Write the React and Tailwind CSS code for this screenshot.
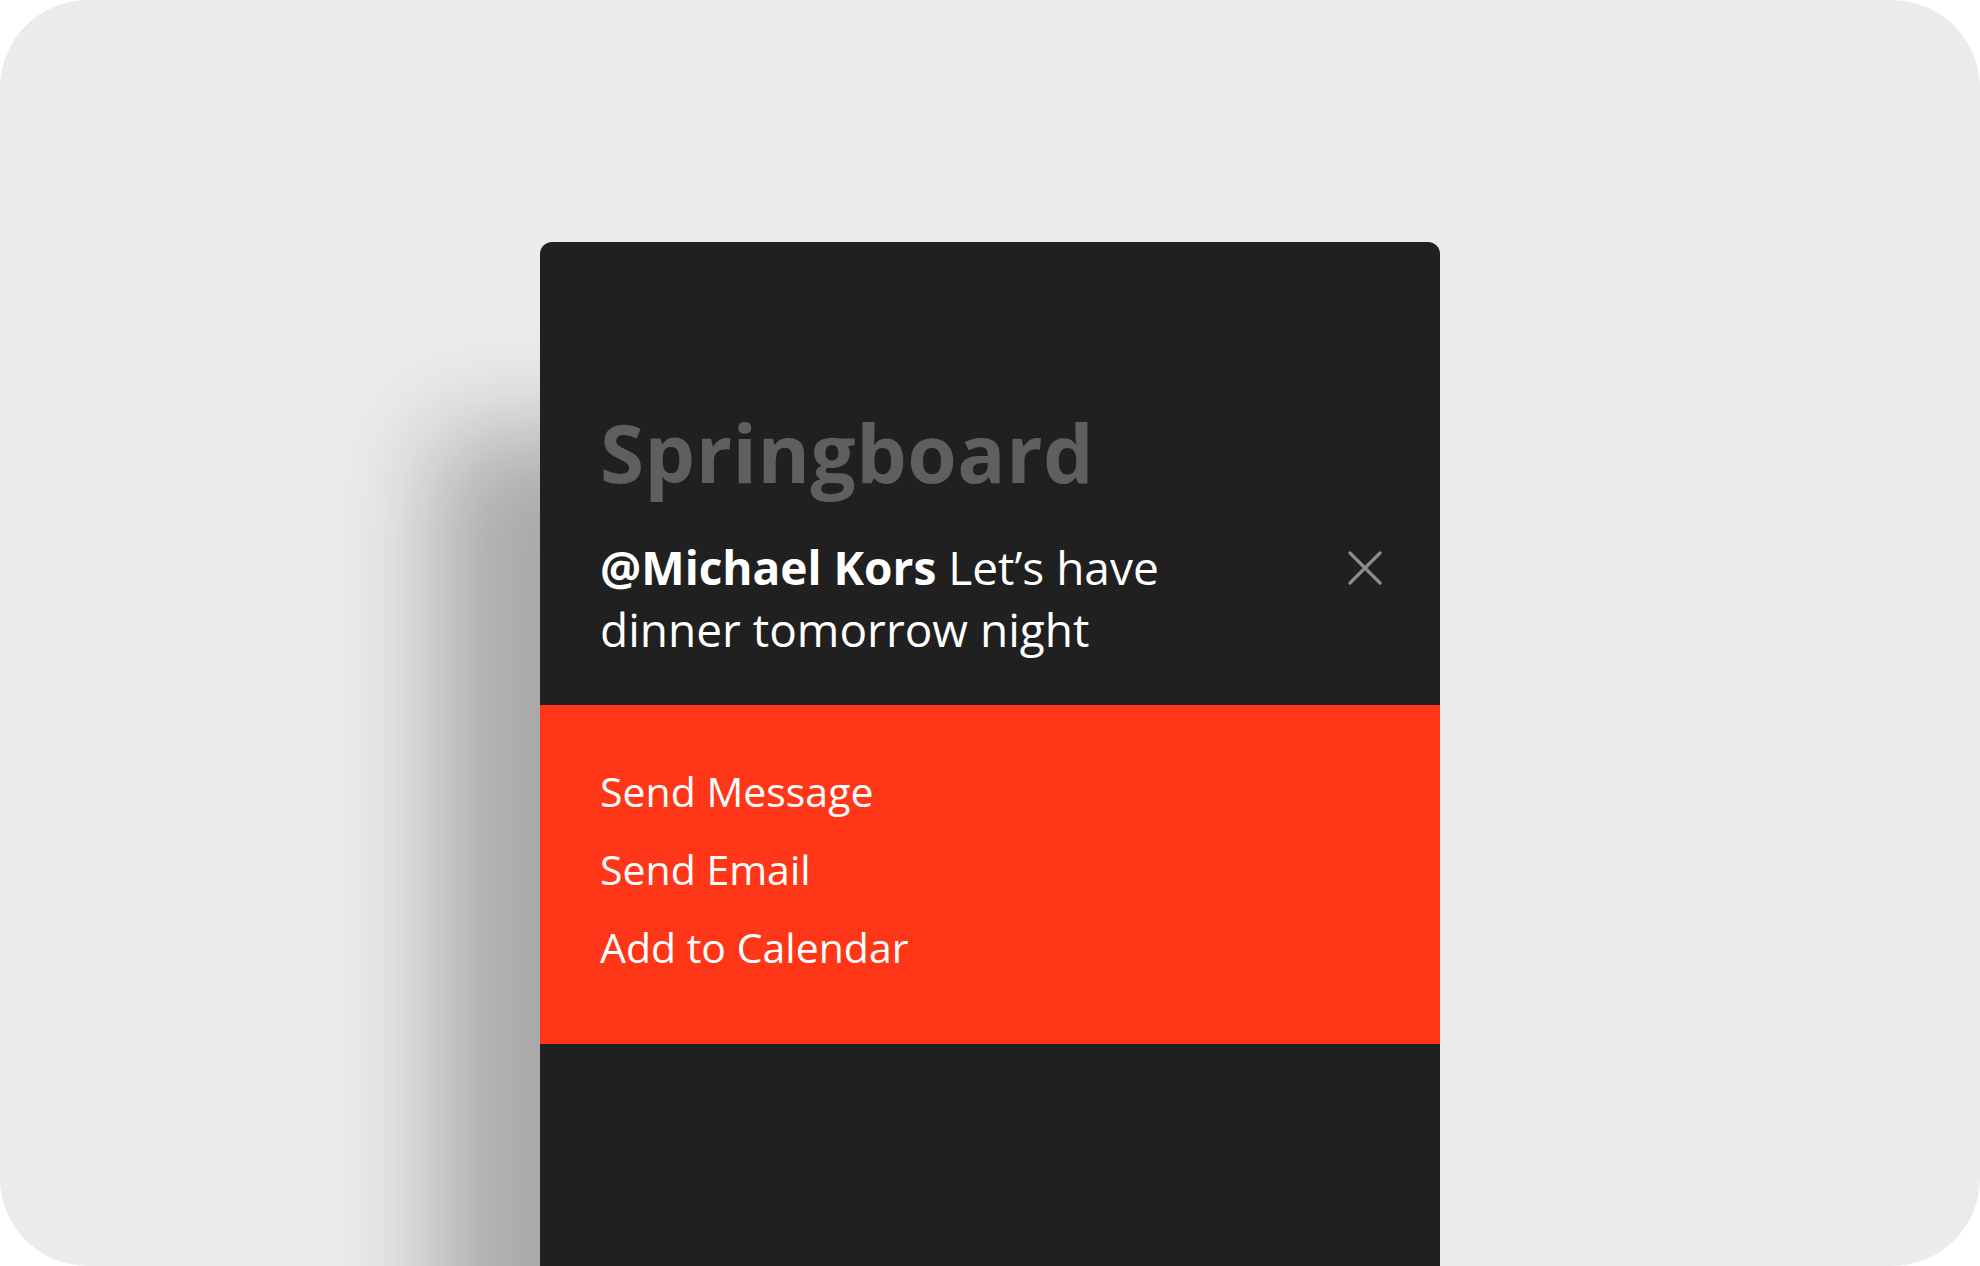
import React from "react";

const App = () => {
  const actions = ["Send Message", "Send Email", "Add to Calendar"];
  return (
    <div className="w-[1980px] h-[1266px] bg-white">
      <div
        className="w-full h-full rounded-[88px] bg-[#ebebeb] overflow-hidden flex justify-center pt-[242px]"
        style={{ fontFamily: '"Open Sans", "Noto Sans", sans-serif' }}
      >
        {/* Notification card */}
        <div className="w-[900px] h-[1100px] shrink-0 rounded-t-xl bg-[#202020] shadow-[-104px_190px_100px_rgba(0,0,0,0.28)] flex flex-col">
          <div className="pl-[60px] pr-[58px] pt-[170px] pb-[45px]">
            <h1 className="text-[80px] leading-[80px] font-bold text-[#5f5f5f] tracking-[0.5px]">
              Springboard
            </h1>
            <div className="mt-[44px] flex justify-between items-start">
              <p className="w-[620px] text-[46px] leading-[62px] text-white">
                <span className="font-bold">@Michael Kors</span>{" "}
                <span>Let’s have dinner tomorrow night</span>
              </p>
              <button className="mt-[15px] w-[34px] h-[34px] flex items-center justify-center">
                <svg width="34" height="34" viewBox="0 0 34 34" fill="none">
                  <path
                    d="M2 2L32 32M32 2L2 32"
                    stroke="#8c8c8c"
                    strokeWidth="3.2"
                    strokeLinecap="round"
                  />
                </svg>
              </button>
            </div>
          </div>
          {/* Actions */}
          <div className="h-[339px] bg-[#ff3618] pl-[60px] pt-[47px]">
            {actions.map((a) => (
              <div key={a} className="text-[41px] leading-[78px] text-white">
                {a}
              </div>
            ))}
          </div>
          <div className="flex-1" />
        </div>
      </div>
    </div>
  );
};

export default App;
